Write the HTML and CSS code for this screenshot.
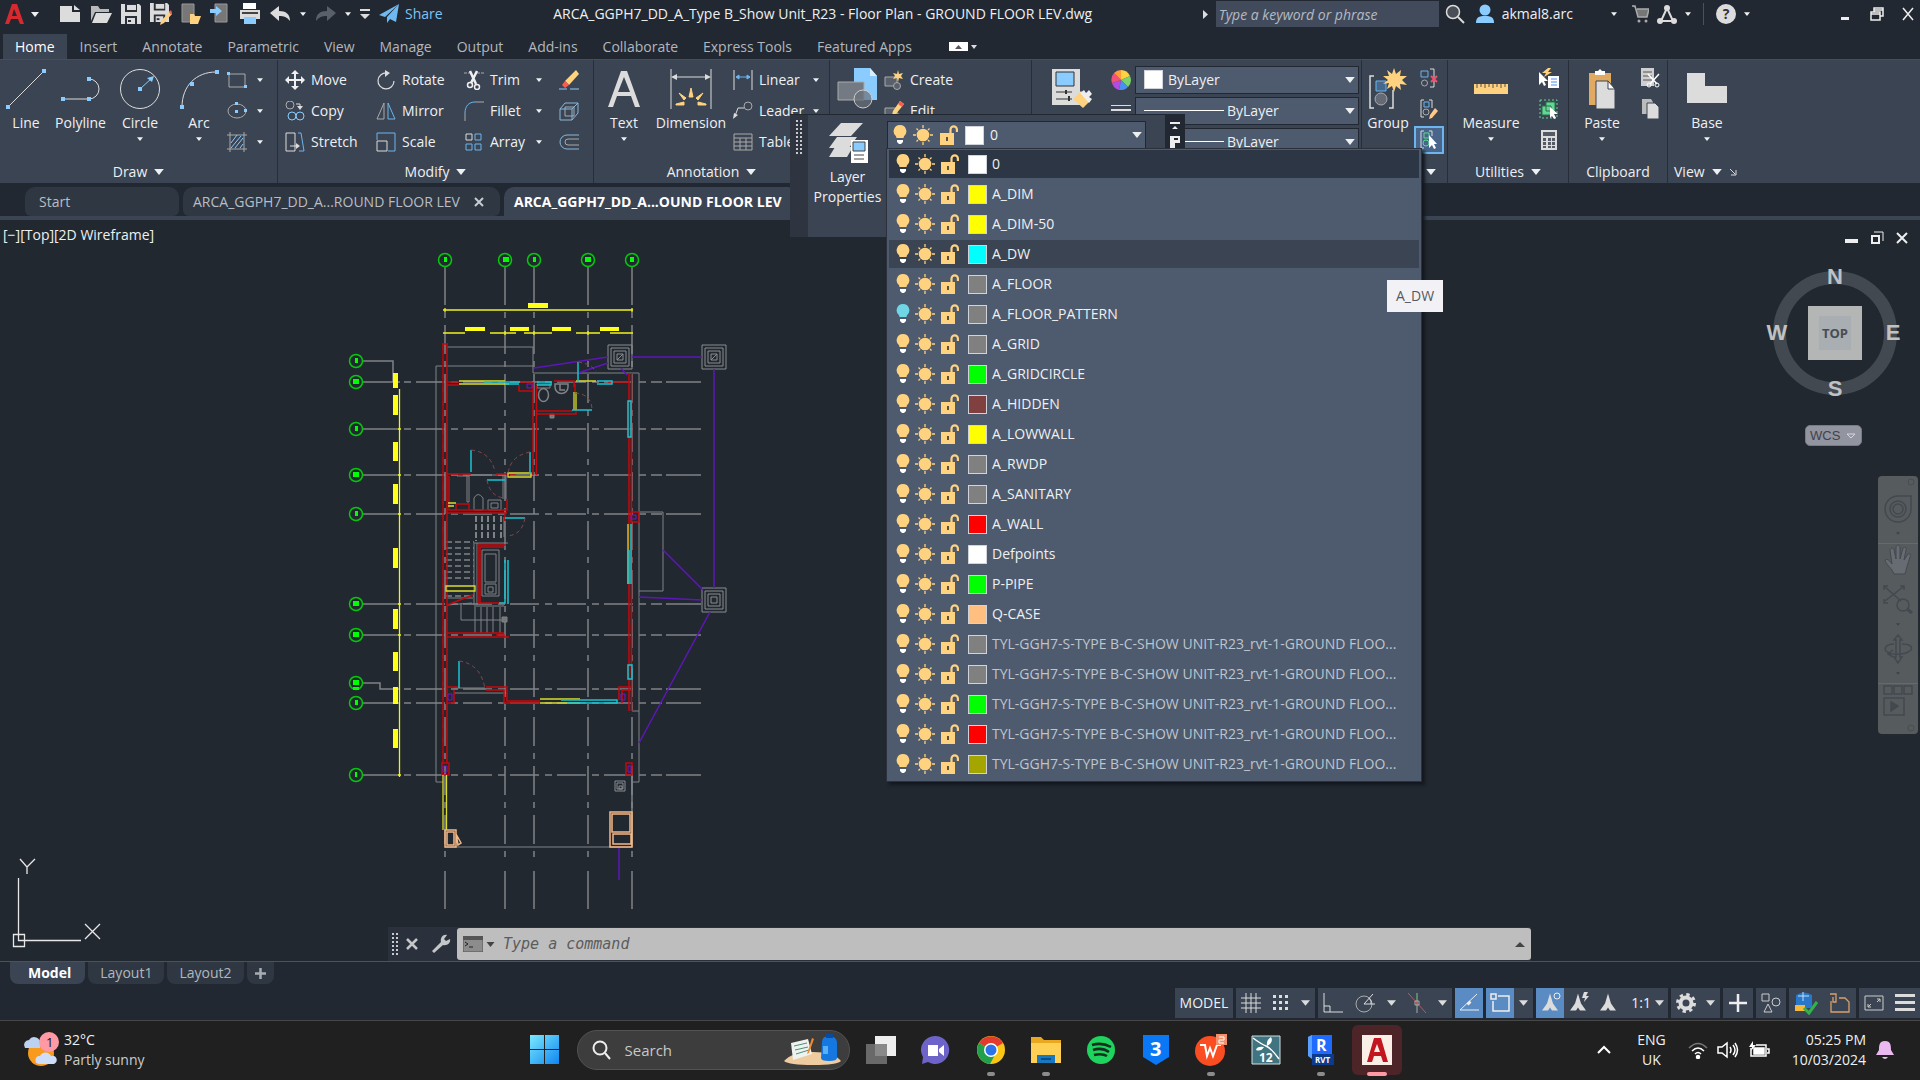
FILE: index.html
```html
<!DOCTYPE html>
<html lang="en">
<head>
    <meta charset="UTF-8">
    <meta name="viewport" content="width=device-width, initial-scale=1.0">
    <title>ARCA_GGPH7_DD_A_Type B_Show Unit_R23</title>
    <link rel="stylesheet" href="styles.css">
</head>
<body>
    <!-- Shared icons -->
    <svg class="sprite" aria-hidden="true">
        <symbol id="bulb" viewBox="0 0 14 20"><path d="M7 0a6.3 6.3 0 0 1 4 11.2L10.5 13h-7L3 11.2A6.3 6.3 0 0 1 7 0z" fill="var(--bulb, #ffd27f)"/><path d="M4 15h6v2l-2 2H6l-2-2z" fill="#fff"/></symbol>
        <symbol id="sun" viewBox="0 0 20 20"><circle cx="10" cy="10" r="6.3" fill="#ffd27f"/><path d="M10 0v3M10 17v3M0 10h3M17 10h3M3.5 3.5L5 5M15 15l1.500 1.500M3.500 16.500L5 15M15 5l1.500-1.500" stroke="#ffd27f" stroke-width="1.300"/></symbol>
        <symbol id="lock" viewBox="0 0 20 20"><path d="M1 8h14v12H1z" fill="#ffd27f"/><path d="M11.500 8V4.500a3.200 3.200 0 0 1 6.400 0V7" fill="none" stroke="#ffd27f" stroke-width="2.200"/><path d="M8 12v4" stroke="#5b5240" stroke-width="2"/></symbol>
        <symbol id="down" viewBox="0 0 8 5"><path d="M0 0h8L4 5z" fill="currentColor"/></symbol>
        <symbol id="save" viewBox="0 0 20 20"><path d="M0 0h18l2 2v18H0z" fill="#dcdcdc"/><path d="M4 0h12v8H4zM4 12h12v8H4z" fill="#2a303a"/><path d="M6 1h9v5H6zM6 14h8v6H6z" fill="#dcdcdc"/><path d="M7 16h3v2H7z" fill="#2a303a"/></symbol>
        <symbol id="fan" viewBox="0 0 20 20"><path d="M10 1l3 10 5 7h-6l-2-3-2 3H2l5-7z" fill="#dcdcdc"/></symbol>
    </svg>

    <header class="titlebar">
        <button class="logo" aria-label="Application menu"><svg width="19" height="21" viewBox="0 0 19 21"><path d="M7 0h5l7 20h-4l-2-5H6l-2 5H0zM9 5l-2 7h5z" fill="#d8292f"/></svg></button>
        <svg class="caret" width="8" height="5"><use href="#down"/></svg>
        <div class="quick">
            <button aria-label="New"><svg width="22" height="20" viewBox="0 0 22 20"><path d="M1 2h12v6h8v10H1zM15 1l6 5h-6z" fill="#dcdcdc"/></svg></button>
            <button aria-label="Open"><svg width="22" height="20" viewBox="0 0 22 20"><path d="M1 2h7l2 3h9v3H5L1 17z" fill="#b9b9b9"/><path d="M6 9h16l-5 10H2z" fill="#dcdcdc"/></svg></button>
            <button aria-label="Save"><svg width="20" height="20"><use href="#save"/></svg></button>
            <button aria-label="Save As"><svg width="22" height="22" viewBox="0 0 22 22"><use href="#save" width="19" height="19"/><path d="M20 8l2 3-8 9-4 2 1-4z" fill="#ffd27f"/><path d="M19 9l2-2 1 3-1 2z" fill="#e5605a"/></svg></button>
            <button aria-label="Open from web"><svg width="20" height="22" viewBox="0 0 20 22"><path d="M1 1h12v18H1z" fill="#777" stroke="#999"/><path d="M9 11h4l1 2h6l-3 8H9z" fill="#ffd27f"/></svg></button>
            <button aria-label="Save to web"><svg width="18" height="22" viewBox="0 0 18 22"><path d="M5 1h12v18H5z" fill="#777" stroke="#999"/><path d="M0 6h6V3l6 5-6 5v-3H0z" fill="#8accff"/></svg></button>
            <button class="plot" aria-label="Plot"><svg width="22" height="22" viewBox="0 0 22 22"><path d="M4 0h13v6H4z" fill="#fff"/><path d="M1 7h20v9H1z" fill="#dcdcdc"/><path d="M3 9h16v2H3z" fill="#444"/><path d="M5 14h12v7H5z" fill="#8accff"/></svg></button>
            <button aria-label="Undo"><svg width="21" height="18" viewBox="0 0 21 18"><path d="M0 8l9-7v5c7 0 11 3 11 10-3-4-6-5-11-5v5z" fill="#dcdcdc"/></svg></button>
            <svg width="6" height="4"><use href="#down"/></svg>
            <button aria-label="Redo"><svg width="21" height="18" viewBox="0 0 21 18"><path d="M21 8l-9-7v5C5 6 1 9 1 16c3-4 6-5 11-5v5z" fill="#5a6069"/></svg></button>
            <svg width="6" height="4"><use href="#down"/></svg>
            <button aria-label="Customize"><svg width="10" height="11" viewBox="0 0 10 11"><path d="M0 0h10v2H0zM0 5h10l-5 5z" fill="#dcdcdc"/></svg></button>
        </div>
        <a href="#" class="share"><svg width="21" height="20" viewBox="0 0 21 20"><path d="M20 0L0 11l6 2zM20 0L8 13v6l3-4 6 3z" fill="#6fb9f2"/></svg>Share</a>
        <h1>ARCA_GGPH7_DD_A_Type B_Show Unit_R23 - Floor Plan - GROUND FLOOR LEV.dwg</h1>
        <div class="account">
            <svg width="5" height="9" viewBox="0 0 5 9"><path d="M0 0l5 4.500L0 9z" fill="#dcdcdc"/></svg>
            <input type="text" class="keyword" placeholder="Type a keyword or phrase" aria-label="Type a keyword or phrase">
            <button aria-label="Search"><svg width="20" height="20" viewBox="0 0 20 20" fill="none"><circle cx="8" cy="8" r="6.500" fill="#4a4f57" stroke="#dcdcdc" stroke-width="1.500"/><path d="M13 13l6 6" stroke="#dcdcdc" stroke-width="2"/></svg></button>
            <button class="user"><svg width="20" height="20" viewBox="0 0 20 20"><circle cx="10" cy="6" r="5.500" fill="#8accff"/><path d="M1 19c0-6 3-7 9-7s9 1 9 7z" fill="#8accff"/></svg>akmal8.arc</button>
            <svg width="6" height="4"><use href="#down"/></svg>
            <button class="cart" aria-label="App store"><svg width="17" height="18" viewBox="0 0 17 18"><path d="M0 1h3l3 11h9l2-8H5" fill="#777" stroke="#aaa" stroke-width="1.500"/><circle cx="7" cy="16" r="1.500" fill="#aaa"/><circle cx="14" cy="16" r="1.500" fill="#aaa"/></svg></button>
            <button aria-label="Autodesk"><svg width="20" height="19" viewBox="0 0 20 19" fill="none"><path d="M10 3L4 16h12z" stroke="#dcdcdc" stroke-width="2"/><circle cx="10" cy="3" r="3" fill="#dcdcdc"/><circle cx="3" cy="16" r="3" fill="#dcdcdc"/><circle cx="17" cy="16" r="3" fill="#dcdcdc"/></svg></button>
            <svg width="6" height="4"><use href="#down"/></svg>
            <span class="rule"></span>
            <button class="help" aria-label="Help">?</button>
            <svg width="6" height="4"><use href="#down"/></svg>
        </div>
        <div class="window-buttons">
            <button aria-label="Minimize"><svg width="14" height="14"><path d="M3 10h8v3H3z" fill="#eee"/></svg></button>
            <button aria-label="Restore"><svg width="14" height="14" fill="none" stroke="#eee" stroke-width="1.500"><path d="M1 5h9v8H1zM1 7h9M4 5V1h9v8h-3M4 3h9"/></svg></button>
            <button aria-label="Close"><svg width="12" height="14" stroke="#eee" stroke-width="1.500"><path d="M1 1l10 12M11 1L1 13"/></svg></button>
        </div>
    </header>

    <nav class="menu">
        <button class="selected">Home</button><button>Insert</button><button>Annotate</button><button>Parametric</button><button>View</button><button>Manage</button><button>Output</button><button>Add-ins</button><button>Collaborate</button><button>Express Tools</button><button>Featured Apps</button>
        <button class="collapse" aria-label="Minimize ribbon"><svg width="28" height="9" viewBox="0 0 28 9"><path d="M0 0h19v9H0z" fill="#fff"/><path d="M6 7h7l-3.500-4z" fill="#556"/><path d="M22 3h6l-3 4z" fill="#ddd"/></svg></button>
    </nav>

    <section class="ribbon">
        <div class="panel draw">
            <div class="tools">
                <button class="big"><svg width="42" height="42" viewBox="0 0 42 42"><path d="M3 39L39 3" stroke="#dcdcdc"/><path d="M1 37h4v4H1zM37 1h4v4h-4z" fill="#8accff"/></svg>Line</button>
                <button class="big"><svg width="42" height="42" viewBox="0 0 42 42" fill="none"><path d="M4 31h25a10 10 0 0 0 0-20" stroke="#dcdcdc"/><path d="M1 29h4v4H1zM27 29h4v4h-4zM27 9h4v4h-4z" fill="#8accff"/></svg>Polyline</button>
                <button class="big"><svg width="42" height="42" viewBox="0 0 42 42" fill="none"><circle cx="21" cy="21" r="19.500" stroke="#dcdcdc"/><path d="M21 21L33 10" stroke="#8accff"/><path d="M19 19h4v4h-4zM35 8l-2 6-5-4z" fill="#8accff"/></svg>Circle<svg class="caret" width="6" height="4"><use href="#down"/></svg></button>
                <button class="big"><svg width="42" height="42" viewBox="0 0 42 42" fill="none"><path d="M4 39C4 18 18 4 38 4" stroke="#dcdcdc"/><path d="M2 37h4v4H2zM12 14h4v4h-4zM37 2h4v4h-4z" fill="#8accff"/></svg>Arc<svg class="caret" width="6" height="4"><use href="#down"/></svg></button>
                <div class="small-col">
                    <button aria-label="Rectangle"><svg width="20" height="18" viewBox="0 0 20 18" fill="none"><path d="M2 3h16v13H2z" stroke="#aaa"/><path d="M0 1h3v3H0zM17 14h3v3h-3z" fill="#8accff"/></svg><svg width="6" height="4"><use href="#down"/></svg></button>
                    <button aria-label="Ellipse"><svg width="20" height="18" viewBox="0 0 20 18" fill="none"><ellipse cx="10" cy="9" rx="9" ry="7" stroke="#aaa"/><path d="M8 0h3v3H8zM8 8h3v3H8zM17 7h3v3h-3z" fill="#8accff"/></svg><svg width="6" height="4"><use href="#down"/></svg></button>
                    <button aria-label="Hatch"><svg width="20" height="20" viewBox="0 0 20 20" fill="none"><path d="M0 3h20M0 17h20M3 0v20M17 0v20" stroke="#aaa"/><path d="M4 11l6-8M4 16L14 4M8 16l8-10M13 16l3-4" stroke="#8accff"/></svg><svg width="6" height="4"><use href="#down"/></svg></button>
                </div>
            </div>
            <button class="panel-name">Draw<svg width="10" height="6"><use href="#down"/></svg></button>
        </div>

        <div class="panel modify">
            <div class="tools modify-grid">
                <button><svg width="20" height="20" viewBox="0 0 20 20"><path d="M9 4H6l4-4 4 4h-3v5h5V6l4 4-4 4v-3h-5v5h3l-4 4-4-4h3v-5H4v3l-4-4 4-4v3h5z" fill="#f0f0f0"/></svg>Move</button>
                <button><svg width="20" height="20" viewBox="0 0 20 20" fill="none"><path d="M11 3a8 8 0 1 0 7 8" stroke="#dcdcdc" stroke-width="1.200"/><path d="M9 0l5 3-5 4z" fill="#dcdcdc"/></svg>Rotate</button>
                <button><svg width="20" height="20" viewBox="0 0 20 20" fill="none"><path d="M0 3h7M13 3h7" stroke="#aaa" stroke-dasharray="3 1"/><path d="M6 1l6 13M13 1L7 13" stroke="#f0f0f0" stroke-width="2.500"/><circle cx="6" cy="15" r="2.500" stroke="#f0f0f0" stroke-width="1.500"/><circle cx="13" cy="17" r="2.500" stroke="#f0f0f0" stroke-width="1.500"/></svg>Trim<svg class="push" width="6" height="4"><use href="#down"/></svg></button>
                <button aria-label="Erase"><svg width="20" height="20" viewBox="0 0 20 20"><path d="M17 0l3 4-10 11-4-4z" fill="#ffd27f"/><path d="M6 11l4 4-4 3-3-3z" fill="#ff5a4d"/><path d="M0 19h8M11 19h9" stroke="#8accff"/></svg></button>

                <button><svg width="20" height="20" viewBox="0 0 20 20" fill="none"><circle cx="5" cy="4" r="4" stroke="#aaa"/><path d="M11 3h4v4" stroke="#dcdcdc"/><path d="M12 5h6l-3 4z" fill="#dcdcdc"/><circle cx="7" cy="15" r="4" stroke="#8accff"/><circle cx="15" cy="15" r="4" stroke="#8accff"/></svg>Copy</button>
                <button><svg width="20" height="20" viewBox="0 0 20 20" fill="none"><path d="M8 2v16H1z" stroke="#aaa"/><path d="M12 2v16h7z" stroke="#6cb5ee"/></svg>Mirror</button>
                <button><svg width="20" height="20" viewBox="0 0 20 20" fill="none"><path d="M1 12C1 5 5 1 11 1" stroke="#6cb5ee"/><path d="M1 20v-8M11 1h9" stroke="#aaa"/></svg>Fillet<svg class="push" width="6" height="4"><use href="#down"/></svg></button>
                <button aria-label="Explode"><svg width="20" height="20" viewBox="0 0 20 20" fill="none"><path d="M6 6h9v9H6z" stroke="#aaa"/><path d="M1 8l5-6h13v10l-6 7H1zM1 8h12v11M13 8l6-6" stroke="#8ab8dc"/></svg></button>

                <button><svg width="20" height="20" viewBox="0 0 20 20" fill="none"><path d="M1 1h9v18H1zM5 14h7" stroke="#dcdcdc"/><path d="M11 11l4 3-4 3z" fill="#dcdcdc"/><path d="M13 1h3l3 18h-5" stroke="#6cb5ee"/></svg>Stretch</button>
                <button><svg width="20" height="20" viewBox="0 0 20 20" fill="none"><path d="M1 8V1h18v18h-7" stroke="#6cb5ee"/><path d="M1 9h10v10H1z" stroke="#dcdcdc"/></svg>Scale</button>
                <button><svg width="20" height="20" viewBox="0 0 20 20" fill="none"><path d="M2 2h6v6H2z" stroke="#dcdcdc"/><path d="M11 2h6v6h-6zM2 12h6v6H2zM11 12h6v6h-6z" stroke="#6cb5ee"/></svg>Array<svg class="push" width="6" height="4"><use href="#down"/></svg></button>
                <button aria-label="Offset"><svg width="20" height="18" viewBox="0 0 20 18" fill="none"><path d="M20 2H8a7 7 0 0 0 0 14h12" stroke="#8ab8dc"/><path d="M20 6H9a3 3 0 0 0 0 6h11" stroke="#aaa"/></svg></button>
            </div>
            <button class="panel-name">Modify<svg width="10" height="6"><use href="#down"/></svg></button>
        </div>

        <div class="panel annotation">
            <div class="tools">
                <button class="big"><svg width="34" height="42" viewBox="0 0 34 42"><path d="M14 3h6l13 36h-5l-4-11H10L6 39H1zM17 9l-6 15h12z" fill="#dcdcdc"/></svg>Text<svg class="caret" width="6" height="4"><use href="#down"/></svg></button>
                <button class="big dimension"><svg width="42" height="42" viewBox="0 0 42 42"><path d="M1 1v40M41 1v40M4 9h34" stroke="#dcdcdc"/><path d="M1 9l6-3v6zM41 9l-6-3v6z" fill="#dcdcdc"/><path d="M6 36l8-2v3H6zM36 36l-8-2v3h8zM9 25l7 5-2 2zM33 25l-7 5 2 2zM21 20l2 9h-4z" fill="#ffd27f" stroke="#ffd27f"/></svg>Dimension</button>
                <div class="list">
                    <button><svg width="20" height="20" viewBox="0 0 20 20"><path d="M1 0v20M19 0v20" stroke="#dcdcdc"/><path d="M3 7h14M3 7l3-2v4zM17 7l-3-2v4z" stroke="#6cb5ee" fill="#6cb5ee"/></svg>Linear<svg class="push" width="6" height="4"><use href="#down"/></svg></button>
                    <button><svg width="20" height="20" viewBox="0 0 20 20" fill="none"><circle cx="15" cy="5" r="4" stroke="#aaa"/><path d="M2 15l3-8h6" stroke="#dcdcdc"/><path d="M0 18l1-6 4 2z" fill="#dcdcdc"/></svg>Leader<svg class="push" width="6" height="4"><use href="#down"/></svg></button>
                    <button><svg width="20" height="18" viewBox="0 0 20 18" fill="none" stroke="#aaa"><path d="M1 1h18v16H1zM1 5h18M1 9h18M1 13h18M7 5v12M13 5v12"/></svg>Table</button>
                </div>
            </div>
            <button class="panel-name">Annotation<svg width="10" height="6"><use href="#down"/></svg></button>
        </div>

        <div class="panel block">
            <div class="tools">
                <button class="big insert" aria-label="Insert"><svg width="42" height="42" viewBox="0 0 42 42"><path d="M18 0h16l7 8v24H18z" fill="#8accff"/><path d="M34 0v8h7z" fill="#d8eeff"/><path d="M2 14h26v18H2z" fill="#747a84" stroke="#aaa"/><circle cx="27" cy="31" r="9" fill="#6a707a" fill-opacity=".7" stroke="#ccc"/></svg></button>
                <div class="list">
                    <button><svg width="20" height="20" viewBox="0 0 20 20"><path d="M1 7h12v9H1z" fill="#59606b" stroke="#aaa"/><circle cx="13" cy="16" r="3.500" fill="#59606b" stroke="#aaa"/><path d="M14 0l1 4 4-1-2 3 2 3-4-1-1 4-1-4-4 1 2-3-2-3 4 1z" fill="#ffd27f"/></svg>Create</button>
                    <button><svg width="20" height="20" viewBox="0 0 20 20"><path d="M1 7h12v9H1z" fill="#59606b" stroke="#aaa"/><circle cx="13" cy="16" r="3.500" fill="#59606b" stroke="#aaa"/><path d="M16 0l4 3-8 10-4 1 1-4z" fill="#ffd27f"/><path d="M16 0l4 3-2 3-4-3z" fill="#ff5a4d"/></svg>Edit</button>
                </div>
            </div>
        </div>

        <div class="panel properties">
            <div class="tools">
                <button class="big match" aria-label="Match Properties"><svg width="42" height="42" viewBox="0 0 42 42"><path d="M1 1h28v36H1z" fill="#dcdcdc"/><path d="M5 4h18v14H5z" fill="#8accff" stroke="#333"/><path d="M5 24h16M5 31h16" stroke="#333"/><path d="M15 22v4M18 28v5" stroke="#333" stroke-width="2"/><path d="M30 23l9 10-7 7-10-9z" fill="#ffd27f"/><path d="M29 25l4-3 2 3 3-3 3 4-3 3 3 2-3 4z" fill="#eee"/></svg></button>
                <div class="prop-rows">
                    <div class="prop-row">
                        <svg width="20" height="20" viewBox="0 0 20 20"><path d="M10 10L10 0a10 10 0 0 1 9 6z" fill="#ffd23f"/><path d="M10 10l9-4a10 10 0 0 1-2 11z" fill="#7bd36c"/><path d="M10 10l7 7a10 10 0 0 1-9 3z" fill="#4a90f0"/><path d="M10 10l-2 10a10 10 0 0 1-7-7z" fill="#b04de0"/><path d="M10 10l-9 3a10 10 0 0 1 2-10z" fill="#f0527a"/><path d="M10 10L3 3a10 10 0 0 1 7-3z" fill="#ff9a3d"/></svg>
                        <div class="combo"><span class="swatch white"></span><select aria-label="Object color"><option>ByLayer</option></select><svg width="10" height="6"><use href="#down"/></svg></div>
                    </div>
                    <div class="prop-row">
                        <svg width="20" height="20" viewBox="0 0 20 20"><path d="M0 4h20v1H0zM0 8h20v2H0zM0 13h20v3H0z" fill="#dcdcdc"/></svg>
                        <div class="combo"><span class="stroke"></span><select aria-label="Lineweight"><option>ByLayer</option></select><svg width="10" height="6"><use href="#down"/></svg></div>
                    </div>
                    <div class="prop-row">
                        <svg width="20" height="20" viewBox="0 0 20 20"><path d="M0 5h20M0 10h20M0 15h20" stroke="#dcdcdc"/></svg>
                        <div class="combo"><span class="stroke"></span><select aria-label="Linetype"><option>ByLayer</option></select><svg width="10" height="6"><use href="#down"/></svg></div>
                    </div>
                </div>
            </div>
        </div>

        <div class="panel groups">
            <div class="tools">
                <button class="big"><svg width="42" height="42" viewBox="0 0 42 42" fill="none"><path d="M7 8H3v32h4M22 40h4V22" stroke="#dcdcdc" stroke-width="1.500"/><path d="M9 13h10v10H9z" fill="#46688a" stroke="#6cb5ee"/><circle cx="14" cy="31" r="6" fill="#646b76" stroke="#aaa"/><path d="M27 0l2 6 5-4-1 6 7 0-5 4 5 5-7-1 1 6-5-4-2 6-2-6-5 3 2-6-6 1 5-4-5-4h6l-2-6 5 4z" fill="#ffd27f"/></svg>Group</button>
                <div class="icon-col">
                    <button aria-label="Ungroup"><svg width="18" height="20" viewBox="0 0 18 20" fill="none"><path d="M1 3h7v6H1z" stroke="#6cb5ee"/><circle cx="4.500" cy="15" r="3" stroke="#aaa"/><path d="M10 1h4v18h-4" stroke="#dcdcdc"/><path d="M11 8l6 6M17 8l-6 6" stroke="#f0526a" stroke-width="2"/></svg></button>
                    <button aria-label="Group Edit"><svg width="18" height="20" viewBox="0 0 18 20" fill="none"><path d="M4 1H1v17h3M9 1h3v8" stroke="#dcdcdc"/><path d="M4 3h5v5H4z" stroke="#6cb5ee"/><circle cx="6" cy="13" r="3" stroke="#aaa"/><path d="M15 9l3 3-6 7-3 1 1-4z" fill="#ffc98a"/></svg></button>
                    <button class="active" aria-label="Group Selection"><svg width="18" height="20" viewBox="0 0 18 20" fill="none"><path d="M4 1H1v17h3M9 1h3v5" stroke="#dcdcdc"/><path d="M4 3h5v5H4z" stroke="#62d695"/><circle cx="6" cy="13" r="3" stroke="#62d695"/><path d="M9 5v13l3-3 2 4 2-1-2-4h3z" fill="#fff"/></svg></button>
                </div>
            </div>
            <button class="panel-name">Groups<svg width="10" height="6"><use href="#down"/></svg></button>
        </div>

        <div class="panel utilities">
            <div class="tools">
                <button class="big"><svg width="36" height="42" viewBox="0 0 36 42"><path d="M1 16h34v10H1z" fill="#ffd27f"/><path d="M4 16v4M8 16v3M12 16v4M16 16v3M20 16v4M24 16v3M28 16v4M32 16v3" stroke="#5b5240"/></svg>Measure<svg class="caret" width="6" height="4"><use href="#down"/></svg></button>
                <div class="icon-col">
                    <button aria-label="Quick Select"><svg width="20" height="20" viewBox="0 0 20 20"><path d="M9 0L3 5h4L5 9l8-5H9l3-4z" fill="#ffd27f"/><path d="M9 8h11v12H9z" fill="#fff"/><path d="M12 11h6M12 14h6M12 17h6" stroke="#4a90f0"/><path d="M0 4v13l3-3 2 4 2-1-2-4h4z" fill="#fff"/></svg></button>
                    <button aria-label="Select All"><svg width="20" height="20" viewBox="0 0 20 20"><path d="M1 1h17v18H1z" fill="none" stroke="#62d695" stroke-dasharray="2 2"/><path d="M7 3h9v9H7zM3 7h9v9H3z" fill="#62d695" stroke="#2d6e4b"/><path d="M11 8v11l2-2 2 3 2-1-2-4h4z" fill="#fff"/></svg></button>
                    <button aria-label="Calculator"><svg width="16" height="20" viewBox="0 0 16 20"><path d="M0 0h16v20H0z" fill="#dcdcdc"/><path d="M2 2h12v4H2zM2 8h3v3H2zM7 8h3v3H7zM11 8h3v3h-3zM2 12h3v3H2zM7 12h3v3H7zM11 12h3v3h-3zM2 16h3v2H2zM7 16h3v2H7zM11 16h3v2h-3z" fill="#555b66"/></svg></button>
                </div>
            </div>
            <button class="panel-name">Utilities<svg width="10" height="6"><use href="#down"/></svg></button>
        </div>

        <div class="panel clipboard">
            <div class="tools">
                <button class="big"><svg width="34" height="42" viewBox="0 0 34 42"><path d="M4 5h22v32H4z" fill="#e0aa62"/><path d="M10 7V3h3l2-2 2 2h3v4z" fill="#fff"/><path d="M11 13h12l7 8v20H11z" fill="#dcdcdc" stroke="#3b4453"/><path d="M23 13v8h7z" fill="#fff" stroke="#3b4453"/></svg>Paste<svg class="caret" width="6" height="4"><use href="#down"/></svg></button>
                <div class="icon-col">
                    <button aria-label="Cut"><svg width="20" height="20" viewBox="0 0 20 20" fill="none"><path d="M1 0h13v18H1z" fill="#cfcfcf"/><path d="M3 4h9M3 8h9M3 12h9" stroke="#555"/><path d="M8 6l9 10M19 6l-9 10" stroke="#fff" stroke-width="1.500"/><circle cx="9" cy="17" r="2" stroke="#fff"/><circle cx="17" cy="17" r="2" stroke="#fff"/></svg></button>
                    <button aria-label="Copy Clip"><svg width="18" height="20" viewBox="0 0 18 20"><path d="M1 0h9l2 3v12H1z" fill="#bbb"/><path d="M6 4h8l4 4v12H6z" fill="#dcdcdc" stroke="#3b4453"/></svg></button>
                </div>
            </div>
            <span class="panel-name">Clipboard</span>
        </div>

        <div class="panel view">
            <div class="tools">
                <button class="big"><svg width="42" height="42" viewBox="0 0 42 42"><path d="M1 5h18v13h22v17H1z" fill="#dcdcdc"/></svg>Base<svg class="caret" width="6" height="4"><use href="#down"/></svg></button>
            </div>
            <button class="panel-name">View<svg width="10" height="6"><use href="#down"/></svg><svg width="8" height="8" viewBox="0 0 8 8" fill="none" stroke="#dcdcdc"><path d="M1 1l5 5M7 2v5H2"/></svg></button>
        </div>
    </section>

    <nav class="file-tabs">
        <button class="start">Start</button>
        <button>ARCA_GGPH7_DD_A...ROUND FLOOR LEV<svg width="10" height="10" stroke="#c8ccd2" stroke-width="2"><path d="M1 1l8 8M9 1L1 9"/></svg></button>
        <button class="selected">ARCA_GGPH7_DD_A...OUND FLOOR LEV</button>
    </nav>

    <main class="canvas">
        <svg class="plan" viewBox="0 220 900 741" width="900" height="741" fill="none">
            <!-- column and row grid -->
            <g stroke="#808386" stroke-width="1.500">
                <path d="M445 267v38M505 267v38M534 267v38M588 267v38M632 267v38"/>
                <path d="M445 312v552M505 312v552M534 312v552M588 312v552M632 312v552" stroke-dasharray="6 7 29 7"/>
                <path d="M445 871v38M505 871v38M534 871v38M588 871v38M632 871v38M632 775v72"/>
                <path d="M363 361h30v21M363 382h37M363 429h37M363 475h37M363 514h37M363 604h37M363 635h37M363 683h17v6h20M363 703h37M363 775h37"/>
                <path d="M404 382h258M404 429h258M404 475h258M404 514h258M404 604h258M404 635h258M404 689h258M404 703h258M404 775h258" stroke-dasharray="7 5 29 6"/>
                <path d="M666 382h35M666 429h35M666 475h35M666 514h35M666 604h35M666 635h35M666 689h35M666 703h35M666 775h35"/>
            </g>
            <g stroke="#808386">
                <path d="M447 347h86v26h106v409h-7M533 366h-97v416h7M639 512h24v79h-24M632 711h7M445 847h187"/>
                <path d="M457 476h12v26h-2v-26M469 475h37v24M503 475v24M504 517v20M474 510v-12q4-7 9 0v12zM488 500h13v10h-13zM491 503h7v5h-7z"/>
                <path d="M482 550h17v46h-17zM485 554h11v28h-11zM485 584h11v10h-11zM488 587h5v5h-5z"/>
                <path d="M446 542h28M446 548h28M446 554h28M446 560h28M446 566h28M446 572h28M446 578h28M446 596h28" stroke-dasharray="6 3" stroke-width="1.500"/>
                <path d="M476 516v25M482 516v22M488 516v22M494 516v22M501 516v22" stroke-dasharray="6 2" stroke-width="2"/>
                <path d="M474 543v62M477 543v62M474 543h34M474 606h30M475 607v26M481 607v26M487 607v26M493 607v26M500 607v26M461 603v17h44M454 693h52M454 688h31M447 598h26M447 605l25-2"/>
                <ellipse cx="543.500" cy="395" rx="5" ry="6.500" stroke-width="1.500"/><path d="M537 384h13v4h-13z"/>
                <path d="M555 384h13v3a6 6 0 0 1-13 0zM560 384v6h5" stroke-width="1.500"/>
                <path d="M550 414h4v4h-4zM502 617h5v5h-5z" fill="#777"/>
            </g>
            <!-- column footings -->
            <g stroke="#8b8d90">
                <path d="M608 345h24v24h-24zM611 348h18v18h-18zM614 351h12v12h-12zM617 354h6v6h-6zM617 360l6-6"/>
                <path d="M702 345h24v24h-24zM705 348h18v18h-18zM708 351h12v12h-12zM711 354h6v6h-6zM711 360l6-6"/>
                <path d="M702 588h24v24h-24zM705 591h18v18h-18zM708 594h12v12h-12zM711 597h6v6h-6z"/>
                <path d="M615 781h10v10h-10zM617 783h6v6h-6zM619 786h3v3h-3z"/>
            </g>
            <!-- pipes -->
            <path d="M632 357h70M714 369v219M663 550l40 40M639 597l63 3M710 612l-71 131M619 848v32M534 368l74-11M578 373l30-10M621 368l6 7" stroke="#5d17b8" stroke-width="1.500"/>
            <!-- walls -->
            <g stroke="#c4080c" stroke-width="1.500">
                <path d="M443 344v419M447 344v419M442 344h6M447 382h12M447 385h12M520 382h12M519 385v6h14M554 381h20v6M608 382h22M533 382v93M536.500 385v90M536 411h37M536 414h40v-5M575 384v8M629 373v338M631.500 373v338"/>
                <path d="M447 474h24M496 474h20M449 476v34M447 510h60v-11M447 513h60M456 504h13v6h-13z"/>
                <path d="M478 603v-58h28M480 603v-56h24M478 603h26M447 605l26-10M447 633h57M447 637h62M505 513v8M496 635h8v2"/>
                <path d="M447 687h11M486 687h21v14h33M486 690h18v13h36M454 690v13h-7M619 700v-13h12M622 703v-13h9M442 763h7v12h-7zM626 763h6v12h-6zM631 512h8v10h-8z"/>
            </g>
            <path d="M443 350v410M630 440v60M630 595v80" stroke="#8f0a10" stroke-dasharray="9 5"/>
            <path d="M448 694h4v6h-4zM621 694h4v6h-4zM443 766h4v6h-4zM628 766h3v6h-3zM631 515h5v4h-5zM527 384h5v4h-5z" stroke="#7a16c8"/>
            <!-- low walls and windows -->
            <path d="M459 381h46M459 384h50M574 392v18M576 392v18M508 473h23v4h-23zM446 586h29v5h-29zM448 503h8M448 506h6M443 775v55M446.500 775v55M540 699h40M540 703h40M628 524v60M576 381h20" stroke="#d9dc2b" stroke-width="1.300"/>
            <path d="M484 382h36M505 384h14M537 382h14v3h-14M578 362v20M572 410h20M471 450v22M530 452v22M487 480h18M505 518h20M505 560v43h-6M508 560v44M628 401h3v36h-3zM631 524v60M629 550v34M628 665h4v14h-4zM459 661v27M561 700h56v3h-50M597 381h15v3h-15" stroke="#19c3cf" stroke-width="1.500"/>
            <path d="M471 450q20 2 24 22M530 452q-20 4-22 22M487 480q3 17 18 18M525 518q-3 17-18 18M459 661q22 3 26 28M575 393q16 1 17 16M578 362q14 2 18 10" stroke="#80484c" stroke-dasharray="4 3"/>
            <!-- cabinets -->
            <path d="M610 812h22v35h-22zM612 814h18v18h-18zM613 834h18v10h-18zM445 830h11v17h-11zM447 832h7v13h-7zM456 834l5 9-3 2z" stroke="#f5b886" stroke-width="1.500"/>
            <!-- dimensions -->
            <path d="M443 310h190M443 333h22M490 333h26M524 333h28M576 333h24M610 333h23M445 308v4M632 308v4M505 331v4M534 331v4M588 331v4M399.500 389v388M398 429h3M398 475h3M398 514h3M398 604h3M398 635h3M398 775h3" stroke="#f2f21c" stroke-width="1.300"/>
            <path d="M528 303h20v5h-20zM465 327h20v4h-20zM510 327h19v4h-19zM552 327h19v4h-19zM600 327h19v4h-19zM393 373h5v15h-5zM393 395h5v20h-5zM393 442h5v19h-5zM393 484h5v20h-5zM393 548h5v20h-5zM393 609h5v20h-5zM393 652h5v19h-5zM393 687h5v17h-5zM393 729h5v19h-5z" fill="#ffff18"/>
            <!-- grid bubbles -->
            <g stroke="#05c80c" stroke-width="1.500">
                <circle cx="445" cy="260" r="6.500"/><circle cx="505" cy="260" r="6.500"/><circle cx="534" cy="260" r="6.500"/><circle cx="588" cy="260" r="6.500"/><circle cx="632" cy="260" r="6.500"/>
                <circle cx="356" cy="361" r="6.500"/><circle cx="356" cy="382" r="6.500"/><circle cx="356" cy="429" r="6.500"/><circle cx="356" cy="475" r="6.500"/><circle cx="356" cy="514" r="6.500"/><circle cx="356" cy="604" r="6.500"/><circle cx="356" cy="635" r="6.500"/><circle cx="356" cy="683" r="6.500"/><circle cx="356" cy="703" r="6.500"/><circle cx="356" cy="775" r="6.500"/>
            </g>
            <path d="M444 257h3v5h-3zM503 257h6v5h-6zM533 257h3v5h-3zM585 257h6v5h-6zM630 257h4v5h-4zM355 358h3v5h-3zM353 379h6v5h-6zM355 426h3v5h-3zM353 472h6v5h-6zM355 511h3v5h-3zM353 601h6v5h-6zM353 632h6v5h-6zM353 680h6v5h-6zM353 687h6v3h-6zM355 700h3v5h-3zM355 772h2v5h-2z" fill="#0f0"/>
            <!-- UCS axes -->
            <path d="M18.500 878v63M18 940.500h63M13.500 934.500h11v12h-11zM20 859l7 8v7M35 859l-8 8M85 924l15 15M100 924l-15 15" stroke="#e8e8e8" stroke-width="1.300"/>
        </svg>

        <div class="view-label"><button>[−]</button><button>[Top]</button><button>[2D Wireframe]</button></div>

        <div class="doc-buttons">
            <button aria-label="Minimize drawing"><svg width="14" height="14"><path d="M1 8h13v4H1z" fill="#eee"/></svg></button>
            <button aria-label="Restore drawing"><svg width="14" height="14" fill="none" stroke="#eee"><path d="M2 5h7v7H2z" stroke-width="2"/><path d="M4 1h9v9"/></svg></button>
            <button aria-label="Close drawing"><svg width="12" height="14" stroke="#eee" stroke-width="2"><path d="M1 2l10 10M11 2L1 12"/></svg></button>
        </div>

        <div class="viewcube">
            <span class="n">N</span><span class="w">W</span><button class="cube"><span>TOP</span></button><span class="e">E</span><span class="s">S</span>
        </div>
        <button class="wcs">WCS <svg width="10" height="6" viewBox="0 0 10 6" fill="none" stroke="#d5d5e0"><path d="M1 1h8L5 5z"/></svg></button>

        <div class="navbar">
            <svg class="dot" width="8" height="8" fill="none" stroke="#474d50"><circle cx="4" cy="4" r="3"/></svg>
            <button aria-label="Steering wheel"><svg width="30" height="30" viewBox="0 0 30 30" fill="none" stroke="#43494f" stroke-width="1.500"><path d="M15 2h13v13a13 13 0 1 1-13-13z"/><circle cx="15" cy="15" r="8"/><circle cx="15" cy="15" r="5"/></svg></button>
            <svg width="4" height="3"><use href="#down"/></svg>
            <button class="line-above" aria-label="Pan"><svg width="30" height="32" viewBox="0 0 30 32" fill="#666c72" stroke="#43494f"><path d="M11 30c-2-6-8-9-9-14 2-2 5 1 7 4L7 6c1-3 4-2 4 0l2 9V3c1-3 4-2 4 0v12l3-11c2-2 4 0 3 2l-2 10 4-6c2-1 3 1 2 3-2 6-4 13-5 17z"/></svg></button>
            <button aria-label="Zoom"><svg width="30" height="30" viewBox="0 0 30 30" fill="none" stroke="#43494f" stroke-width="1.500"><path d="M2 3l16 14M20 3L2 17M1 6V2h4M17 2h4v4M1 15v4h4"/><circle cx="20" cy="21" r="6"/><path d="M24 25l5 4" stroke-width="3"/></svg></button>
            <svg width="4" height="3"><use href="#down"/></svg>
            <button aria-label="Orbit"><svg width="30" height="30" viewBox="0 0 30 30" fill="none" stroke="#43494f" stroke-width="1.500"><path d="M15 1l4 5h-2v17h2l-4 6-4-6h2V6h-2zM11 10C3 10 1 14 3 17c5 5 20 4 25-1 2-4-2-6-9-6M10 16l-5 4 5 3"/></svg></button>
            <svg width="4" height="3"><use href="#down"/></svg>
            <button class="line-above" aria-label="Show motion"><svg width="30" height="32" viewBox="0 0 30 32" fill="none" stroke="#43494f" stroke-width="1.500"><path d="M1 2h8v8H1zM11 2h8v8h-8zM21 2h8v8h-8zM1 14h20v17H1z"/><path d="M8 18l7 4-7 5z" fill="#43494f"/></svg></button>
            <svg class="dot" width="8" height="8" fill="none" stroke="#474d50"><circle cx="4" cy="4" r="3"/></svg>
        </div>

        <div class="command">
            <span class="grip"></span>
            <button aria-label="Close command line"><svg width="12" height="12" stroke="#c4c6c8" stroke-width="2.500"><path d="M1 1l10 10M11 1L1 11"/></svg></button>
            <button class="wrench" aria-label="Customize command line"><svg width="20" height="20" viewBox="0 0 20 20"><path d="M1 17l9-9c-1-4 2-8 6-7l-3 4 2 2 4-2c1 4-3 7-7 6l-9 8z" fill="#c4c6c8"/></svg></button>
            <div class="command-box">
                <svg width="20" height="16" viewBox="0 0 20 16"><path d="M0 0h20v16H0z" fill="#8c8c8c" stroke="#555"/><path d="M0 0h20v4H0z" fill="#555"/><path d="M2 6l3 2-3 2M6 11h4" stroke="#222" fill="none"/></svg>
                <svg class="caret" width="9" height="5"><use href="#down"/></svg>
                <input type="text" placeholder="Type a command" aria-label="Type a command">
                <svg width="10" height="5" viewBox="0 0 10 5"><path d="M0 5h10L5 0z" fill="#444"/></svg>
            </div>
        </div>
    </main>

    <nav class="layouts">
        <button class="selected">Model</button><button>Layout1</button><button>Layout2</button><button class="add" aria-label="New layout"><svg width="11" height="11" stroke="#a8adb4" stroke-width="2.500"><path d="M5.500 0v11M0 5.500h11"/></svg></button>
    </nav>

    <footer class="status">
        <div class="cell"><button>MODEL</button></div>
        <div class="cell wide">
            <button aria-label="Grid"><svg width="20" height="20" stroke="#dcdcdc"><path d="M0 5h20M0 10h20M0 15h20M5 0v20M10 0v20M15 0v20"/></svg></button>
            <button aria-label="Snap"><svg width="16" height="16" fill="#dcdcdc"><path d="M0 0h3v3H0zM6 0h3v3H6zM12 0h3v3h-3zM0 6h3v3H0zM6 6h3v3H6zM12 6h3v3h-3zM0 12h3v3H0zM6 12h3v3H6zM12 12h3v3h-3z"/></svg></button>
            <svg class="caret" width="9" height="6"><use href="#down"/></svg>
        </div>
        <div class="cell wide">
            <button aria-label="Ortho"><svg width="20" height="20" fill="none" stroke="#dcdcdc"><path d="M1 0v19h19M1 13h6v6"/></svg></button>
            <button aria-label="Polar"><svg width="20" height="20" fill="none" stroke="#aaa"><circle cx="9" cy="11" r="8"/><path d="M9 11L18 1M9 11h11M14 5q3 3 2 6" stroke="#ddd"/></svg></button>
            <svg class="caret" width="9" height="6"><use href="#down"/></svg>
            <button aria-label="Isodraft"><svg width="18" height="20" fill="none"><path d="M9 0v12" stroke="#7fc97f"/><path d="M0 0l18 20" stroke="#c05560"/><path d="M7 8h4v4H7zM9 12v8" stroke="#aaa"/></svg></button>
            <svg class="caret" width="9" height="6"><use href="#down"/></svg>
        </div>
        <div class="cell on"><button aria-label="Tracking"><svg width="20" height="20" fill="none" stroke="#eee"><path d="M18 1L1 17h19"/><path d="M9 9l2 2" stroke-width="4"/></svg></button></div>
        <div class="cell on"><button aria-label="Osnap"><svg width="20" height="20" fill="none" stroke="#eee" stroke-width="1.500"><path d="M1 1h5v5H1zM8 3h11v15H3V8"/></svg></button></div>
        <div class="cell narrow"><svg class="caret" width="9" height="6"><use href="#down"/></svg></div>
        <div class="cell on"><button aria-label="Annotation visibility"><svg width="22" height="22"><use href="#fan" width="20" height="21"/><circle cx="17" cy="4" r="3" fill="none" stroke="#eee"/></svg></button></div>
        <div class="cell joined">
            <button aria-label="Auto scale"><svg width="22" height="22"><use href="#fan" width="20" height="21"/><path d="M16 0l-2 6h3l-1 4 5-6h-3l2-4z" fill="#dcdcdc"/></svg></button>
            <button aria-label="Annotation scale"><svg width="20" height="22"><use href="#fan" width="20" height="21"/></svg></button>
            <button class="scale">1:1<svg class="caret" width="9" height="6"><use href="#down"/></svg></button>
        </div>
        <div class="cell gear">
            <button aria-label="Workspace"><svg width="20" height="20" fill="none" stroke="#dcdcdc"><circle cx="10" cy="10" r="5.500" stroke-width="4"/><circle cx="10" cy="10" r="8.500" stroke-width="3" stroke-dasharray="3.340 3.340"/></svg></button>
            <svg class="caret" width="9" height="6"><use href="#down"/></svg>
        </div>
        <div class="cell"><button aria-label="Annotation monitor"><svg width="20" height="20" stroke="#eee" stroke-width="2.500"><path d="M10 1v18M1 10h18"/></svg></button></div>
        <div class="cell"><button aria-label="Isolate"><svg width="20" height="20" fill="none" stroke="#ccc"><path d="M1 1h7v7H1zM3 19l4-8 4 8z"/><circle cx="15" cy="9" r="4"/></svg></button></div>
        <div class="cell pair">
            <button aria-label="Hardware"><svg width="24" height="24" viewBox="0 0 24 24"><path d="M2 4q8-5 16 0v13H2z" fill="#2877c8"/><path d="M1 14h10v6H1z" fill="#f5b93a"/><path d="M9 1v9M4 5h11" stroke="#bfe0ff"/><path d="M10 17l5 5 8-11" fill="none" stroke="#2fb34a" stroke-width="3"/></svg></button>
            <button aria-label="Clean"><svg width="22" height="20" fill="none" stroke="#d9a06a" stroke-width="1.300"><path d="M2 8v11h18V9l-4-4h-6"/><path d="M1 1h6v8H4V4"/></svg></button>
        </div>
        <div class="cell pair">
            <button aria-label="Clean screen"><svg width="20" height="16" fill="none" stroke="#ccc"><path d="M1 1h18v14H1zM4 12l3-3M16 4l-3 3M4 9v3h3M13 4h3v3"/></svg></button>
            <button aria-label="Customization"><svg width="20" height="18" fill="#dcdcdc"><path d="M0 0h20v3H0zM0 7h20v3H0zM0 14h20v3H0z"/></svg></button>
        </div>
    </footer>

    <footer class="taskbar">
        <button class="weather">
            <svg width="36" height="38" viewBox="0 0 36 38"><circle cx="18" cy="22" r="13" fill="#f79a1e"/><path d="M2 17a5 5 0 0 1 4-8 6 6 0 0 1 11 2v6z" fill="#bcd2f2"/><path d="M16 33a4 4 0 0 1 1-8 6 6 0 0 1 11 0 4 4 0 0 1 3 8z" fill="#cfdef8"/><circle cx="26" cy="11" r="10" fill="#ff99a4"/><text x="23" y="16" font-size="13" fill="#201010">1</text></svg>
            <span><b>32°C</b><i>Partly sunny</i></span>
        </button>
        <div class="apps">
            <button aria-label="Start"><svg width="30" height="30"><defs><linearGradient id="win" x2="1" y2="1"><stop stop-color="#7be9ff"/><stop offset="1" stop-color="#0f86f0"/></linearGradient></defs><path d="M0 0h14v14H0zM15 0h14v14H15zM0 15h14v14H0zM15 15h14v14H15z" fill="url(#win)"/></svg></button>
            <label class="search">
                <svg width="20" height="20" fill="none" stroke="#eee" stroke-width="2"><circle cx="8" cy="8" r="6.500"/><path d="M13 13l5 6"/></svg>
                <input type="text" placeholder="Search">
                <svg width="58" height="32" viewBox="0 0 58 32"><path d="M0 27q8-9 29-9t28 9q-4 4-28 4T0 27z" fill="#efcba0"/><path d="M7 9l17-4 4 15-19 6z" fill="#eef3f0"/><path d="M10 12l13-3M11 16l13-3M12 20l13-4" stroke="#4f8f7a"/><path d="M28 4l2 1-5 14-2 1z" fill="#f28a2c"/><path d="M38 8q0-6 7-6t8 6v16q0 3-8 3t-8-3z" fill="#1478e0"/><path d="M42 0h7v4h-7z" fill="#0b4aa0"/><path d="M39 12h5v8h-5z" fill="#58b0f8"/></svg>
            </label>
            <button aria-label="Task view"><svg width="32" height="30"><path d="M10 1h21v20H10z" fill="#eee"/><path d="M1 9h21v20H1z" fill="#777" fill-opacity=".85"/></svg></button>
            <button aria-label="Chat"><svg width="30" height="30"><path d="M15 1a14 14 0 1 1-8 26l-6 2 1-7A14 14 0 0 1 15 1z" fill="#6d63c8"/><path d="M7 10h10v11H7zM18 14l5-4v11l-5-4z" fill="#fff"/></svg></button>
            <button class="open" aria-label="Chrome"><svg width="30" height="30" viewBox="0 0 30 30"><circle cx="15" cy="15" r="14" fill="#f9c616"/><path d="M15 15L3 8a14 14 0 0 1 24 0z" fill="#e23a2e"/><path d="M15 15L3 8a14 14 0 0 0 11 21l6-11z" fill="#21a04c"/><circle cx="15" cy="15" r="7" fill="#fff"/><circle cx="15" cy="15" r="5.500" fill="#2c72e8"/></svg></button>
            <button class="open" aria-label="File Explorer"><svg width="32" height="30"><path d="M1 2h10l3 3h17v22H1z" fill="#e9a820"/><path d="M1 8h30v20H1z" fill="#ffd054"/><path d="M7 20h18v8H7z" fill="#1979c0"/><path d="M11 24h10" stroke="#0c4f86" stroke-width="2"/></svg></button>
            <button aria-label="Spotify"><svg width="30" height="30"><circle cx="15" cy="15" r="14" fill="#1ed35e"/><path d="M6 10q10-3 19 2M7 15q9-3 16 2M8 20q8-2 13 1" fill="none" stroke="#12301c" stroke-width="2.500"/></svg></button>
            <button aria-label="3"><svg width="28" height="32"><path d="M1 1h26v22l-13 8-13-8z" fill="#0a78f5"/><text x="8" y="22" font-size="20" font-weight="700" fill="#fff">3</text></svg></button>
            <button class="open" aria-label="WPS Office"><svg width="34" height="32"><circle cx="16" cy="17" r="15" fill="#fa4d22"/><path d="M6 11h5l2 11 3-8 3 8 4-11h4" fill="none" stroke="#fff" stroke-width="2"/><path d="M22 0h11v11H22z" fill="#f0916c"/><path d="M25 3h5v3h-5v3h5" fill="none" stroke="#fff"/></svg></button>
            <button aria-label="Sketch 12"><svg width="30" height="30"><path d="M1 1h28v28H1z" fill="#3f7480" stroke="#cfe0e2"/><path d="M2 3q8 6 13 8t13 13" fill="none" stroke="#fff" stroke-width="1.500"/><path d="M16 11q-1-6 4-9 3 5-4 9zM13 12q-7-1-8 3 5 2 8-3z" fill="#fff"/><text x="8" y="27" font-size="12" font-weight="700" fill="#fff">12</text></svg></button>
            <button class="open" aria-label="Revit"><svg width="30" height="32"><path d="M2 3l4-2h20v20H2z" fill="#1f6bff"/><path d="M2 3l4-2v24l-4-3z" fill="#5aa0ff"/><path d="M6 20h22v11H6z" fill="#0c3a8c"/><text x="10" y="17" font-size="16" font-weight="700" fill="#fff">R</text><text x="9" y="29" font-size="8" font-weight="700" fill="#fff">RVT</text></svg></button>
            <button class="open current" aria-label="AutoCAD"><svg width="30" height="30"><path d="M0 0h30v30H0z" fill="#fbeee6"/><path d="M12 3h7l7 24h-5l-2-6h-7l-2 6H5zM15 9l-3 8h6z" fill="#c3151f"/></svg></button>
        </div>
        <div class="tray">
            <button aria-label="Hidden icons"><svg width="14" height="9" fill="none" stroke="#fff" stroke-width="2"><path d="M1 8l6-6 6 6"/></svg></button>
            <button class="lang">ENG<br>UK</button>
            <button class="net" aria-label="Network"><svg width="20" height="18" fill="none" stroke="#fff" stroke-width="1.500"><path d="M1 7q9-9 18 0" stroke="#777"/><path d="M4 10q6-6 12 0M7 13q3-3 6 0"/><circle cx="10" cy="16" r="1.500" fill="#fff"/></svg><svg width="22" height="18" fill="none" stroke="#fff" stroke-width="1.500"><path d="M1 6h4l5-4v14l-5-4H1zM13 6q2 3 0 6M16 4q4 5 0 10M18 2q5 7 0 14"/></svg><svg width="22" height="18" fill="none" stroke="#fff" stroke-width="1.500"><path d="M3 7v8h15V4H8M19 8h2v4h-2"/><path d="M6 7h10v6H6z" fill="#fff"/><path d="M5 0L1 6h3l-1 4 5-6H5z" fill="#fff" stroke="none"/></svg></button>
            <button class="clock">05:25 PM<br>10/03/2024</button>
            <button aria-label="Notifications"><svg width="18" height="20"><path d="M9 1c6 0 6 5 6 9l3 5H0l3-5c0-4 0-9 6-9zM6 17h6q-3 4-6 0z" fill="#e9b9f0"/></svg></button>
        </div>
    </footer>

    <!-- Floating layers panel -->
    <aside class="layers-panel">
        <div class="layers-handle"><span class="grip"></span></div>
        <button class="big layer-props"><svg width="42" height="42" viewBox="0 0 42 42"><path d="M14 1h22L24 14H2zM10 15h20L22 26H2zM8 25h18l-6 10H2z" fill="#dcdcdc"/><path d="M24 18h17v23H24z" fill="#fff"/><path d="M26 20h12v9H26z" fill="#8accff" stroke="#444"/><path d="M27 33h10M27 37h10" stroke="#444"/></svg>Layer<br>Properties</button>
        <div class="combo layer-combo">
            <svg width="14" height="20"><use href="#bulb"/></svg><svg width="20" height="20"><use href="#sun"/></svg><svg width="20" height="20"><use href="#lock"/></svg><span class="swatch white"></span>
            <select aria-label="Layer"><option>0</option></select><svg width="10" height="6"><use href="#down"/></svg>
        </div>
        <div class="layers-end"><svg width="10" height="30" viewBox="0 0 10 30"><path d="M0 1h10v2H0zM2 8h6L5 5zM0 15h10v7H5v7H0z" fill="#eee"/><path d="M4 17h4v2H4z" fill="#222831"/></svg></div>
    </aside>

    <ul class="layer-list">
        <li class="current"><button><svg class="bulb"><use href="#bulb"/></svg><svg class="sun"><use href="#sun"/></svg><svg class="lock"><use href="#lock"/></svg><span class="swatch white"></span>0</button></li>
        <li><button><svg class="bulb"><use href="#bulb"/></svg><svg class="sun"><use href="#sun"/></svg><svg class="lock"><use href="#lock"/></svg><span class="swatch yellow"></span>A_DIM</button></li>
        <li><button><svg class="bulb"><use href="#bulb"/></svg><svg class="sun"><use href="#sun"/></svg><svg class="lock"><use href="#lock"/></svg><span class="swatch yellow"></span>A_DIM-50</button></li>
        <li class="hovered"><button><svg class="bulb"><use href="#bulb"/></svg><svg class="sun"><use href="#sun"/></svg><svg class="lock"><use href="#lock"/></svg><span class="swatch cyan"></span>A_DW</button></li>
        <li><button><svg class="bulb"><use href="#bulb"/></svg><svg class="sun"><use href="#sun"/></svg><svg class="lock"><use href="#lock"/></svg><span class="swatch grey"></span>A_FLOOR</button></li>
        <li class="off"><button><svg class="bulb"><use href="#bulb"/></svg><svg class="sun"><use href="#sun"/></svg><svg class="lock"><use href="#lock"/></svg><span class="swatch grey"></span>A_FLOOR_PATTERN</button></li>
        <li><button><svg class="bulb"><use href="#bulb"/></svg><svg class="sun"><use href="#sun"/></svg><svg class="lock"><use href="#lock"/></svg><span class="swatch grey"></span>A_GRID</button></li>
        <li><button><svg class="bulb"><use href="#bulb"/></svg><svg class="sun"><use href="#sun"/></svg><svg class="lock"><use href="#lock"/></svg><span class="swatch green"></span>A_GRIDCIRCLE</button></li>
        <li><button><svg class="bulb"><use href="#bulb"/></svg><svg class="sun"><use href="#sun"/></svg><svg class="lock"><use href="#lock"/></svg><span class="swatch brown"></span>A_HIDDEN</button></li>
        <li><button><svg class="bulb"><use href="#bulb"/></svg><svg class="sun"><use href="#sun"/></svg><svg class="lock"><use href="#lock"/></svg><span class="swatch yellow"></span>A_LOWWALL</button></li>
        <li><button><svg class="bulb"><use href="#bulb"/></svg><svg class="sun"><use href="#sun"/></svg><svg class="lock"><use href="#lock"/></svg><span class="swatch grey"></span>A_RWDP</button></li>
        <li><button><svg class="bulb"><use href="#bulb"/></svg><svg class="sun"><use href="#sun"/></svg><svg class="lock"><use href="#lock"/></svg><span class="swatch grey"></span>A_SANITARY</button></li>
        <li><button><svg class="bulb"><use href="#bulb"/></svg><svg class="sun"><use href="#sun"/></svg><svg class="lock"><use href="#lock"/></svg><span class="swatch red"></span>A_WALL</button></li>
        <li><button><svg class="bulb"><use href="#bulb"/></svg><svg class="sun"><use href="#sun"/></svg><svg class="lock"><use href="#lock"/></svg><span class="swatch white"></span>Defpoints</button></li>
        <li><button><svg class="bulb"><use href="#bulb"/></svg><svg class="sun"><use href="#sun"/></svg><svg class="lock"><use href="#lock"/></svg><span class="swatch green"></span>P-PIPE</button></li>
        <li><button><svg class="bulb"><use href="#bulb"/></svg><svg class="sun"><use href="#sun"/></svg><svg class="lock"><use href="#lock"/></svg><span class="swatch peach"></span>Q-CASE</button></li>
        <li class="xref"><button><svg class="bulb"><use href="#bulb"/></svg><svg class="sun"><use href="#sun"/></svg><svg class="lock"><use href="#lock"/></svg><span class="swatch grey"></span>TYL-GGH7-S-TYPE B-C-SHOW UNIT-R23_rvt-1-GROUND FLOO...</button></li>
        <li class="xref"><button><svg class="bulb"><use href="#bulb"/></svg><svg class="sun"><use href="#sun"/></svg><svg class="lock"><use href="#lock"/></svg><span class="swatch grey"></span>TYL-GGH7-S-TYPE B-C-SHOW UNIT-R23_rvt-1-GROUND FLOO...</button></li>
        <li class="xref"><button><svg class="bulb"><use href="#bulb"/></svg><svg class="sun"><use href="#sun"/></svg><svg class="lock"><use href="#lock"/></svg><span class="swatch green"></span>TYL-GGH7-S-TYPE B-C-SHOW UNIT-R23_rvt-1-GROUND FLOO...</button></li>
        <li class="xref"><button><svg class="bulb"><use href="#bulb"/></svg><svg class="sun"><use href="#sun"/></svg><svg class="lock"><use href="#lock"/></svg><span class="swatch red"></span>TYL-GGH7-S-TYPE B-C-SHOW UNIT-R23_rvt-1-GROUND FLOO...</button></li>
        <li class="xref"><button><svg class="bulb"><use href="#bulb"/></svg><svg class="sun"><use href="#sun"/></svg><svg class="lock"><use href="#lock"/></svg><span class="swatch olive"></span>TYL-GGH7-S-TYPE B-C-SHOW UNIT-R23_rvt-1-GROUND FLOO...</button></li>
    </ul>
    <div class="tooltip" role="tooltip">A_DW</div>
</body>
</html>
```
FILE: styles.css
```css
* {
    box-sizing: border-box;
}

body {
    margin: 0;
    min-height: 100vh;
    display: flex;
    flex-direction: column;
    position: relative;
    overflow: hidden;
    font-family: "Open Sans", "Noto Sans", sans-serif;
    font-size: 14px;
    line-height: 20px;
    color: #eef0f2;
    background-color: #222831;
}

button, input, select {
    font: inherit;
    color: inherit;
    background: none;
    border: none;
    margin: 0;
    padding: 0;
    outline: none;
}

button {
    display: flex;
    align-items: center;
    white-space: nowrap;
    cursor: pointer;
}

svg {
    display: block;
    flex: none;
}

.sprite {
    position: absolute;
    width: 0;
    height: 0;
}

/* Title bar */
.titlebar {
    display: flex;
    align-items: center;
    height: 34px;
    padding: 0 6px 6px 5px;
    background-color: #222831;
}

.titlebar .caret {
    margin-left: 7px;
}

.quick {
    display: flex;
    align-items: center;
    gap: 9px;
    margin-left: 20px;
}

.quick .plot {
    margin-left: 2px;
}

.share {
    display: flex;
    align-items: center;
    gap: 5px;
    margin-left: 9px;
    color: #7cc4f8;
    font-size: 14px;
    text-decoration: none;
}

.titlebar h1 {
    flex: 1;
    margin: 0;
    text-align: center;
    font-size: 14px;
    font-weight: normal;
    white-space: nowrap;
}

.account {
    display: flex;
    align-items: center;
    gap: 8px;
}

.keyword {
    width: 223px;
    height: 26px;
    margin-right: -2px;
    padding: 0 3px;
    background-color: #424b5c;
    font-style: italic;
}

.keyword::placeholder {
    color: #b4bac4;
    opacity: 1;
}

.user {
    gap: 7px;
    margin: 0 30px 0 2px;
}

.cart {
    margin-left: 7px;
}

.rule {
    width: 1px;
    height: 22px;
    margin: 0 4px;
    background-color: #4a515c;
}

.help {
    justify-content: center;
    width: 20px;
    height: 20px;
    border-radius: 50%;
    background-color: #dcdcdc;
    color: #333;
    font-weight: bold;
}

.window-buttons {
    display: flex;
    gap: 18px;
    margin-left: 88px;
}

/* Ribbon tabs */
.menu {
    display: flex;
    gap: 1px;
    height: 25px;
    padding-left: 3px;
    color: #b2b7be;
}

.menu button {
    padding: 0 12px;
}

.menu .selected {
    background-color: #3b4453;
    color: #fff;
}

.menu .collapse {
    padding: 0 24px;
}

/* Ribbon */
.ribbon {
    display: flex;
    height: 124px;
    background-color: #3b4453;
    border-top: 1px solid #454e5d;
}

.panel {
    display: flex;
    flex-direction: column;
    justify-content: space-between;
    padding-top: 4px;
    border-right: 1px solid #272e39;
}

.tools {
    display: flex;
}

.panel-name {
    display: flex;
    justify-content: center;
    align-items: center;
    gap: 7px;
    height: 22px;
}

.big {
    flex-direction: column;
    width: 57px;
    padding-top: 4px;
}

.big svg:first-child {
    margin-bottom: 3px;
}

.big .caret {
    margin-top: 4px;
}

.list, .small-col, .icon-col {
    display: flex;
    flex-direction: column;
}

.list button, .small-col button, .modify-grid button {
    height: 31px;
    gap: 6px;
}

.list button {
    width: 86px;
}

.small-col button {
    gap: 10px;
}

.push {
    margin-left: auto;
    margin-right: 17px;
}

.icon-col button {
    justify-content: center;
    width: 30px;
    height: 28px;
    margin-bottom: 3px;
}

.icon-col .active {
    border: 2px solid #6cb5ee;
    background-color: #49658a;
}

.draw {
    width: 278px;
}

.draw .tools {
    display: grid;
    grid-template-columns: 52px 57px 62px 56px 50px;
}

.draw .big {
    width: auto;
}

.modify {
    width: 316px;
}

.modify-grid {
    display: grid;
    grid-template-columns: 91px 88px 95px 30px;
    padding-left: 7px;
}

.annotation {
    width: 236px;
}

.annotation .big {
    width: 60px;
}

.annotation .dimension {
    width: 74px;
}

.annotation .list {
    margin-left: 5px;
}

.annotation .list .push {
    margin-right: 0;
}

.block {
    width: 202px;
}

.block .insert {
    width: 54px;
}

.properties {
    width: 330px;
}

.properties .match {
    width: 79px;
}

.prop-row {
    display: flex;
    align-items: center;
    gap: 4px;
    height: 31px;
}

.combo {
    display: flex;
    align-items: center;
    gap: 5px;
    width: 224px;
    height: 28px;
    padding: 0 3px 0 8px;
    border: 1px solid #222831;
    background-color: #4e5a6d;
}

.combo select {
    flex: 1;
    appearance: none;
}

.stroke {
    width: 80px;
    height: 1px;
    margin-right: -2px;
    background-color: #fff;
}

.swatch {
    flex: none;
    width: 19px;
    height: 19px;
    border: 1px solid #d0d4da;
}

.white { background-color: #fff; }
.yellow { background-color: #ff0; }
.cyan { background-color: #0ff; }
.grey { background-color: #808080; }
.green { background-color: #0f0; }
.brown { background-color: #804040; }
.red { background-color: #f00; }
.peach { background-color: #ffbf7f; }
.olive { background-color: #a5a500; }

.groups {
    width: 86px;
}

.groups .big {
    width: 52px;
}

.groups .panel-name {
    justify-content: flex-end;
    padding-right: 11px;
}

.utilities {
    width: 121px;
}

.utilities .big {
    width: 86px;
}

.clipboard {
    width: 99px;
}

.clipboard .big {
    width: 66px;
}

.view {
    flex: 1;
    border-right: none;
}

.view .big {
    width: 78px;
}

.view .panel-name {
    justify-content: flex-start;
    padding-left: 6px;
}

/* Drawing file tabs */
.file-tabs {
    display: flex;
    gap: 4px;
    height: 37px;
    padding: 4px 0 0 25px;
    border-bottom: 4px solid #3b4453;
    color: #b8bdc6;
}

.file-tabs button {
    height: 29px;
    padding: 0 16px 0 10px;
    gap: 14px;
    border-radius: 10px 10px 6px 6px;
    background-color: #2f3743;
}

.file-tabs .start {
    width: 154px;
    padding-left: 14px;
}

.file-tabs .selected {
    border-radius: 10px 10px 0 0;
    background-color: #3b4453;
    color: #fff;
    font-weight: bold;
}

/* Drawing area */
.canvas {
    position: relative;
    flex: 1;
    min-height: 741px;
    overflow: hidden;
    background-color: #212830;
}

.view-label {
    position: absolute;
    top: 5px;
    left: 3px;
    display: flex;
}

.doc-buttons {
    position: absolute;
    top: 11px;
    right: 12px;
    display: flex;
    gap: 12px;
}

.viewcube {
    position: absolute;
    z-index: 0;
    top: 47px;
    right: 11px;
    display: grid;
    grid-template: 36px 60px 36px / 32px 84px 32px;
    place-items: center;
    color: #bfc1c3;
    font-family: "Liberation Sans", sans-serif;
    font-size: 22px;
    font-weight: bold;
}

.viewcube::before {
    content: "";
    position: absolute;
    z-index: -1;
    inset: 4px 12px;
    border: 13px solid #434951;
    border-radius: 50%;
}

.n, .s {
    grid-column: 1 / 4;
}

.n {
    align-self: start;
}

.s {
    align-self: end;
}

.cube {
    justify-content: center;
    width: 54px;
    height: 54px;
    background-color: #b4b6b6;
}

.cube span {
    padding: 7px 3px;
    background-color: #a9aeb2;
    color: #484c52;
    font-family: "Open Sans", sans-serif;
    font-size: 13px;
}

.wcs {
    position: absolute;
    top: 205px;
    right: 58px;
    gap: 6px;
    width: 57px;
    height: 21px;
    padding: 0 4px;
    border-radius: 5px;
    border: 1px solid #787a88;
    background-color: #92949f;
    color: #3f424c;
    font-family: "Liberation Sans", sans-serif;
    font-size: 13px;
}

.navbar {
    position: absolute;
    top: 256px;
    right: 2px;
    display: flex;
    flex-direction: column;
    align-items: center;
    justify-content: space-between;
    width: 40px;
    height: 258px;
    padding: 2px 0;
    border-radius: 4px;
    background-color: #565b5e;
    color: #3c4248;
}

.navbar .dot {
    align-self: flex-end;
    margin-right: 3px;
}

.line-above {
    width: 40px;
    justify-content: center;
    border-top: 1px solid #646a6d;
}

.grip {
    width: 8px;
    height: 24px;
    background-image: radial-gradient(#c8cace 1px, transparent 1px);
    background-size: 4px 4px;
}

.command {
    position: absolute;
    left: 388px;
    right: 389px;
    bottom: 0;
    display: flex;
    align-items: center;
    height: 34px;
    background-color: #2a303c;
}

.command .grip {
    margin: 0 7px 0 3px;
}

.wrench {
    margin: 0 6px 0 13px;
}

.command-box {
    display: flex;
    flex: 1;
    align-items: center;
    height: 32px;
    padding: 0 6px;
    border-radius: 3px;
    background-color: #bebebe;
    color: #444;
}

.command-box .caret {
    margin: 0 8px 0 3px;
}

.command-box input {
    flex: 1;
    font-family: "DejaVu Sans Mono", monospace;
    font-size: 15px;
    font-style: italic;
}

.command-box input::placeholder {
    color: #5c5c5c;
    opacity: 1;
}

/* Model and layout tabs */
.layouts {
    display: flex;
    gap: 3px;
    height: 27px;
    padding: 0 0 4px 10px;
    border-top: 1px solid #4a525c;
    color: #b2b7be;
}

.layouts button {
    padding: 0 12px;
    border-radius: 0 0 8px 8px;
    background-color: #2f3743;
}

.layouts .selected {
    padding: 0 14px 0 18px;
    background-color: #3b4453;
    color: #fff;
    font-weight: bold;
}

.layouts .add {
    padding: 0 8px;
}

/* Status bar */
.status {
    display: flex;
    justify-content: flex-end;
    gap: 3px;
    height: 32px;
    padding-bottom: 2px;
}

.cell {
    display: flex;
    align-items: center;
    gap: 10px;
    padding: 0 5px;
    background-color: #3b4453;
}

.cell .caret {
    color: #dcdcdc;
}

.cell.wide {
    gap: 12px;
}

.cell.on {
    width: 28px;
    padding: 0 4px;
    background-color: #5b8bc3;
}

.cell.narrow {
    margin-left: -3px;
}

.cell.joined {
    gap: 8px;
    margin-left: -3px;
    padding: 0 4px;
}

.scale {
    gap: 4px;
    padding-left: 5px;
}

.pair {
    gap: 11px;
}

/* Windows taskbar */
.taskbar {
    display: flex;
    align-items: center;
    position: relative;
    height: 60px;
    padding-bottom: 2px;
    border-top: 1px solid #474747;
    background-color: #202020;
}

.weather {
    gap: 5px;
    padding-left: 23px;
    text-align: left;
}

.weather b, .weather i {
    display: block;
    font-weight: normal;
    font-style: normal;
}

.weather i {
    color: #ccc;
}

.apps {
    display: flex;
    align-items: center;
    margin-left: 375px;
}

.apps button {
    position: relative;
    justify-content: center;
    width: 55px;
    height: 50px;
}

.apps button:first-child {
    width: 50px;
}

.apps .open::after {
    content: "";
    position: absolute;
    bottom: -1px;
    width: 8px;
    height: 4px;
    border-radius: 2px;
    background-color: #8c8c8c;
}

.apps .current {
    width: 50px;
    margin-left: 3px;
    border-radius: 6px;
    background-color: #4d2529;
}

.apps .current::after {
    width: 20px;
    background-color: #ff99a4;
}

.search {
    display: flex;
    align-items: center;
    gap: 13px;
    width: 273px;
    height: 40px;
    margin: 0 4px 0 7px;
    padding: 0 7px 0 14px;
    border: 1px solid #525252;
    border-radius: 20px;
    background-color: #3d3d3d;
}

.search input {
    flex: 1;
    min-width: 0;
    font-size: 15px;
}

.search input::placeholder {
    color: #c8c8c8;
    opacity: 1;
}

.tray {
    display: flex;
    align-items: center;
    gap: 10px;
    margin-left: auto;
    padding-right: 26px;
}

.lang {
    margin-left: 16px;
    text-align: center;
}

.net {
    gap: 9px;
    margin: 0 12px 0 12px;
}

.clock {
    text-align: right;
}

/* Floating layers panel */
.layers-panel {
    position: absolute;
    top: 114px;
    left: 790px;
    display: flex;
    align-items: flex-start;
    width: 395px;
    height: 123px;
    border-top: 1px solid #222831;
    background-color: #3b4453;
}

.layers-handle {
    width: 18px;
    height: 122px;
    padding: 4px 5px;
    background-color: #2e3541;
}

.layers-handle .grip {
    display: block;
    height: 36px;
}

.layer-props {
    width: 79px;
    padding-top: 7px;
    text-align: center;
}

.layer-combo {
    gap: 6px;
    width: 259px;
    margin-top: 6px;
    padding-left: 5px;
}

.layers-end {
    width: 20px;
    height: 36px;
    margin-left: auto;
    padding: 6px 5px;
    background-color: #222831;
}

.layer-list {
    position: absolute;
    top: 148px;
    left: 886px;
    width: 536px;
    margin: 0;
    padding: 1px 2px;
    border: 1px solid #2b323e;
    background-color: #4e5a6d;
    box-shadow: 3px 3px 3px #14181e;
    list-style: none;
}

.layer-list button {
    gap: 5px;
    width: 100%;
    height: 28px;
    margin-bottom: 2px;
    padding-left: 7px;
}

.layer-list .bulb {
    width: 14px;
    height: 20px;
}

.layer-list .sun, .layer-list .lock {
    width: 20px;
    height: 20px;
}

.layer-list .lock {
    margin-right: 3px;
}

.layer-list .current button {
    background-color: #2d3644;
}

.layer-list .hovered button {
    background-color: #3b4453;
}

.layer-list .off {
    --bulb: #6fd6e6;
}

.layer-list .xref {
    color: #bfc5ce;
}

.tooltip {
    position: absolute;
    top: 280px;
    left: 1387px;
    padding: 6px 9px;
    background-color: #f2f2f6;
    color: #555a60;
    line-height: 20px;
}
```
